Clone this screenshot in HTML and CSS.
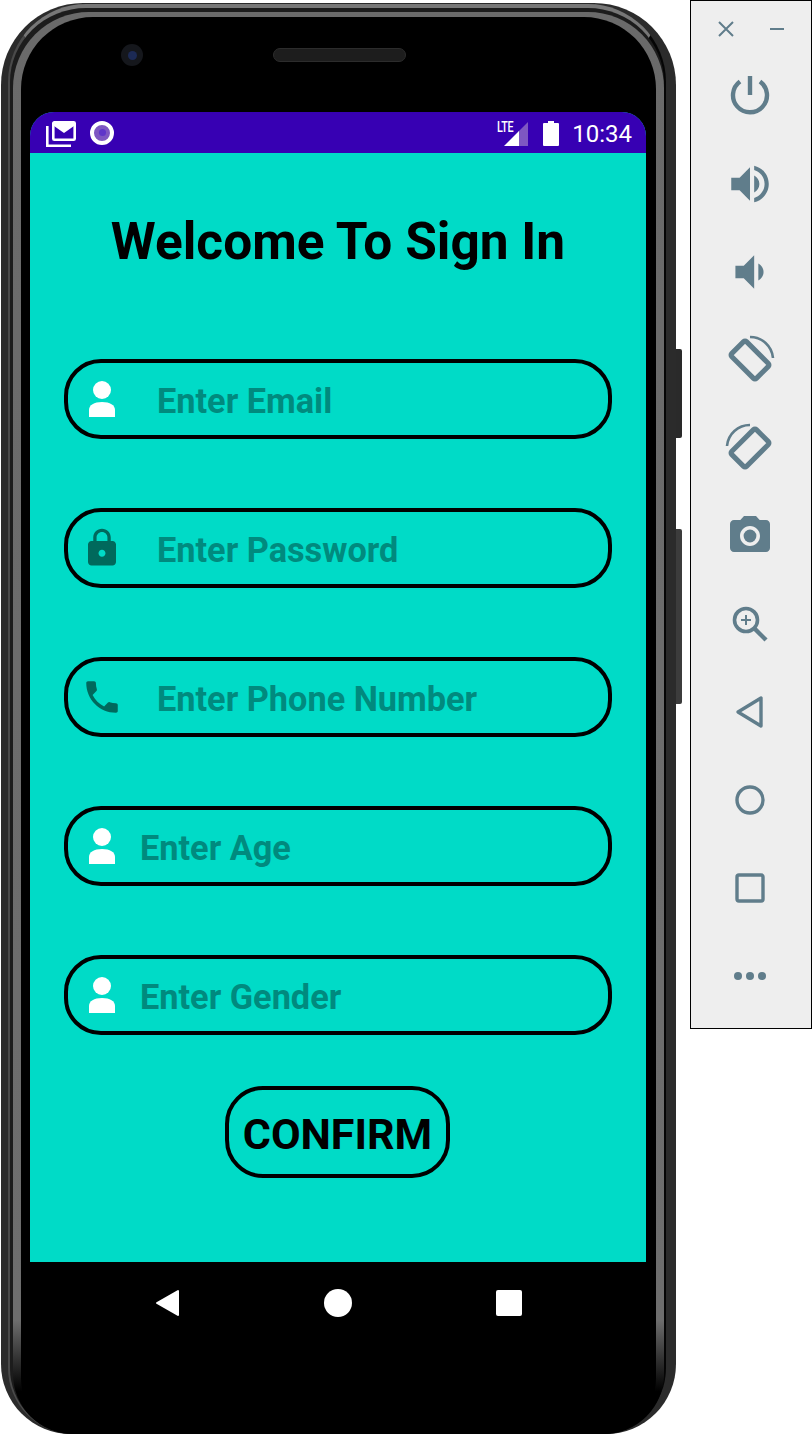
FILE: index.html
```html
<!DOCTYPE html>
<html lang="en">
<head>
<meta charset="UTF-8">
<meta name="viewport" content="width=device-width, initial-scale=1.0">
<title>Welcome To Sign In</title>
<link rel="stylesheet" href="styles.css">
</head>
<body>

<div class="phone">
    <div class="side-btn side-power"></div>
    <div class="side-btn side-volume"></div>
    <div class="band">
        <div class="rim">
            <div class="face">
                <div class="earpiece">
                    <div class="camera"><div class="lens"></div></div>
                    <div class="speaker"></div>
                </div>

                <div class="screen">
                    <div class="status-bar">
                        <svg class="st-mail" width="30" height="26" viewBox="0 0 30 26">
                            <path d="M1.300 5v19.700H25" fill="none" stroke="#fff" stroke-width="2.600"/>
                            <rect x="7.300" y="1.300" width="21.400" height="17.400" rx="1" fill="none" stroke="#fff" stroke-width="2.600"/>
                            <path d="M8 2h20v3l-10 7L8 5z" fill="#fff"/>
                        </svg>
                        <div class="st-record"><div class="st-record-dot"></div></div>
                        <div class="st-spacer"></div>
                        <div class="st-signal">
                            <span class="st-lte">LTE</span>
                            <svg width="26" height="26" viewBox="0 0 26 26">
                                <path d="M25 1v24H15V11z" fill="#7e57c2"/>
                                <path d="M1 25l15-15v15z" fill="#fff"/>
                            </svg>
                        </div>
                        <svg class="st-battery" width="16" height="25" viewBox="0 0 16 25">
                            <path d="M5 0h6v2h4a1 1 0 0 1 1 1v21a1 1 0 0 1-1 1H1a1 1 0 0 1-1-1V3a1 1 0 0 1 1-1h4z" fill="#fff"/>
                        </svg>
                        <span class="st-time">10:34</span>
                    </div>

                    <h1 class="title">Welcome To Sign In</h1>

                    <div class="fields">
                        <div class="field">
                            <div class="field-icon">
                                <svg width="42" height="42" viewBox="0 0 42 42">
                                    <circle cx="21" cy="12" r="9" fill="#fff"/>
                                    <path d="M8 39v-7c0-5 5-8 13-8s13 3 13 8v7z" fill="#fff"/>
                                </svg>
                            </div>
                            <span class="field-text">Enter Email</span>
                        </div>
                        <div class="field">
                            <div class="field-icon">
                                <svg width="42" height="42" viewBox="0 0 24 24">
                                    <path fill="#00695c" d="M18 8h-1V6c0-2.760-2.240-5-5-5S7 3.240 7 6v2H6c-1.100 0-2 .9-2 2v10c0 1.100.9 2 2 2h12c1.100 0 2-.9 2-2V10c0-1.100-.9-2-2-2zm-6 9c-1.100 0-2-.9-2-2s.9-2 2-2 2 .9 2 2-.9 2-2 2zm3.100-9H8.900V6c0-1.710 1.390-3.100 3.100-3.100 1.710 0 3.100 1.390 3.100 3.100v2z"/>
                                </svg>
                            </div>
                            <span class="field-text">Enter Password</span>
                        </div>
                        <div class="field">
                            <div class="field-icon">
                                <svg width="42" height="42" viewBox="0 0 24 24">
                                    <path fill="#00695c" d="M6.620 10.790c1.440 2.830 3.760 5.140 6.590 6.590l2.200-2.200c.27-.27.67-.36 1.020-.24 1.120.37 2.330.57 3.570.57.55 0 1 .45 1 1V20c0 .55-.45 1-1 1-9.390 0-17-7.610-17-17 0-.55.45-1 1-1h3.500c.55 0 1 .45 1 1 0 1.250.2 2.450.57 3.570.11.35.03.74-.25 1.020l-2.200 2.200z"/>
                                </svg>
                            </div>
                            <span class="field-text">Enter Phone Number</span>
                        </div>
                        <div class="field">
                            <div class="field-icon">
                                <svg width="42" height="42" viewBox="0 0 42 42">
                                    <circle cx="21" cy="12" r="9" fill="#fff"/>
                                    <path d="M8 39v-7c0-5 5-8 13-8s13 3 13 8v7z" fill="#fff"/>
                                </svg>
                            </div>
                            <span class="field-text field-text-near">Enter Age</span>
                        </div>
                        <div class="field">
                            <div class="field-icon">
                                <svg width="42" height="42" viewBox="0 0 42 42">
                                    <circle cx="21" cy="12" r="9" fill="#fff"/>
                                    <path d="M8 39v-7c0-5 5-8 13-8s13 3 13 8v7z" fill="#fff"/>
                                </svg>
                            </div>
                            <span class="field-text field-text-near">Enter Gender</span>
                        </div>
                    </div>

                    <div class="confirm-row">
                        <button class="confirm">CONFIRM</button>
                    </div>
                </div>

                <div class="nav-bar">
                    <svg width="26" height="30" viewBox="0 0 26 30">
                        <path d="M24 3v24L3 15z" fill="#fff" stroke="#fff" stroke-width="2" stroke-linejoin="round"/>
                    </svg>
                    <div class="nav-home"></div>
                    <div class="nav-recent"></div>
                </div>
            </div>
        </div>
    </div>
</div>

<div class="toolbar">
    <div class="toolbar-top">
        <svg width="16" height="16" viewBox="0 0 16 16">
            <path d="M1 1l14 14M15 1L1 15" stroke="#607d8b" stroke-width="2" fill="none"/>
        </svg>
        <div class="minimize"></div>
    </div>
    <div class="tool">
        <svg width="50" height="50" viewBox="0 0 50 50" fill="none" stroke="#607d8b" stroke-width="4.400">
            <path d="M15 10.500A17 17 0 1 0 35 10.500"/>
            <path d="M25 5v19"/>
        </svg>
    </div>
    <div class="tool">
        <svg width="50" height="50" viewBox="0 0 24 24">
            <path fill="#607d8b" d="M3 9v6h4l5 5V4L7 9H3zm13.500 3c0-1.770-1.020-3.290-2.500-4.030v8.050c1.480-.73 2.500-2.250 2.500-4.020zM14 3.230v2.060c2.890.86 5 3.540 5 6.710s-2.110 5.850-5 6.710v2.060c4.010-.91 7-4.490 7-8.770s-2.990-7.860-7-8.770z"/>
        </svg>
    </div>
    <div class="tool">
        <svg width="50" height="50" viewBox="0 0 24 24">
            <path fill="#607d8b" d="M18.500 12c0-1.770-1.020-3.290-2.500-4.030v8.050c1.480-.73 2.500-2.250 2.500-4.020zM5 9v6h4l5 5V4L9 9H5z"/>
        </svg>
    </div>
    <div class="tool">
        <svg width="50" height="50" viewBox="0 0 50 50" fill="none" stroke="#607d8b">
            <rect x="7.500" y="14.500" width="35" height="21" rx="2" stroke-width="5" transform="rotate(45 25 25)"/>
            <path d="M25 2A23 23 0 0 1 48 23" stroke-width="2.600"/>
        </svg>
    </div>
    <div class="tool">
        <svg width="50" height="50" viewBox="0 0 50 50" fill="none" stroke="#607d8b">
            <rect x="7.500" y="14.500" width="35" height="21" rx="2" stroke-width="5" transform="rotate(-45 25 25)"/>
            <path d="M25 2A23 23 0 0 0 2 23" stroke-width="2.600"/>
        </svg>
    </div>
    <div class="tool">
        <svg width="48" height="48" viewBox="0 0 24 24">
            <path fill="#607d8b" d="M9 2L7.170 4H4c-1.100 0-2 .9-2 2v12c0 1.100.9 2 2 2h16c1.100 0 2-.9 2-2V6c0-1.100-.9-2-2-2h-3.170L15 2H9zm3 15c-2.760 0-5-2.240-5-5s2.240-5 5-5 5 2.240 5 5-2.240 5-5 5z"/>
            <circle cx="12" cy="12" r="3.200" fill="#607d8b"/>
        </svg>
    </div>
    <div class="tool">
        <svg width="50" height="50" viewBox="0 0 50 50" fill="none" stroke="#607d8b">
            <circle cx="21" cy="21" r="11.500" stroke-width="3.600"/>
            <path d="M29.500 29.500L41 41" stroke-width="4.400"/>
            <path d="M21 16v10M16 21h10" stroke-width="2"/>
        </svg>
    </div>
    <div class="tool">
        <svg width="50" height="50" viewBox="0 0 50 50" fill="none" stroke="#607d8b" stroke-width="3.400" stroke-linejoin="round">
            <path d="M36 11v28L13 25z"/>
        </svg>
    </div>
    <div class="tool">
        <svg width="50" height="50" viewBox="0 0 50 50" fill="none" stroke="#607d8b" stroke-width="3.400">
            <circle cx="25" cy="25" r="13"/>
        </svg>
    </div>
    <div class="tool">
        <svg width="50" height="50" viewBox="0 0 50 50" fill="none" stroke="#607d8b" stroke-width="3.400">
            <rect x="12" y="12" width="26" height="26" rx="2"/>
        </svg>
    </div>
    <div class="tool">
        <svg width="50" height="50" viewBox="0 0 50 50" fill="#607d8b">
            <circle cx="13" cy="25" r="4"/>
            <circle cx="25" cy="25" r="4"/>
            <circle cx="37" cy="25" r="4"/>
        </svg>
    </div>
</div>

</body>
</html>
```

FILE: styles.css
```css
html, body {
    height: 1434px;
}

body {
    font-family: Roboto, "Liberation Sans", sans-serif;
    margin: 0;
    padding: 0;
    background: #fff;
    display: flex;
    align-items: flex-start;
    overflow: hidden;
}

/* phone body */
.phone {
    position: relative;
    flex: none;
    width: 675px;
    height: 1431px;
    margin: 3px 0 0 1px;
    padding: 1px 10px 0 7px;
    box-sizing: border-box;
    background: #2b2b2b;
    border-radius: 82px 82px 70px 70px;
}

.side-btn {
    position: absolute;
    left: 675px;
    width: 6px;
    background: #2a2a2a;
    border-radius: 0 2px 2px 0;
}

.side-power {
    top: 346px;
    height: 89px;
}

.side-volume {
    top: 526px;
    height: 175px;
    background: #3c3c3c;
}

.band {
    height: 100%;
    padding: 4px 0 0 3px;
    box-sizing: border-box;
    border-top: 4px solid #777;
    border-left: 2px solid #4a4a4a;
    border-right: 2px solid #050505;
    background: #1c1c1c;
    border-radius: 78px 78px 66px 66px;
}

.rim {
    height: 100%;
    padding: 5px 8px 0 8px;
    box-sizing: border-box;
    background: linear-gradient(to bottom, #6a6a6a, #6e6e6e 92%, #000 97%);
    border-radius: 76px 76px 60px 60px;
}

.face {
    height: 100%;
    padding: 0 10px 0 9px;
    box-sizing: border-box;
    background: #000;
    border-radius: 72px 72px 56px 56px;
}

.earpiece {
    height: 95px;
    display: flex;
    align-items: flex-start;
    padding: 26px 0 0 91px;
    box-sizing: border-box;
}

.camera {
    width: 22px;
    height: 22px;
    margin-top: 1px;
    border-radius: 50%;
    background: #15171c;
    display: flex;
    align-items: center;
    justify-content: center;
}

.lens {
    width: 9px;
    height: 9px;
    border-radius: 50%;
    background: #1c2a55;
}

.speaker {
    width: 133px;
    height: 14px;
    margin: 5px 0 0 130px;
    box-sizing: border-box;
    border: 1px solid #2c2c2c;
    border-radius: 7px;
    background: #1d1d1d;
}

/* app screen */
.screen {
    width: 616px;
    height: 1150px;
    background: #00dbc7;
    border-radius: 24px 24px 0 0;
    overflow: hidden;
}

.status-bar {
    height: 41px;
    display: flex;
    align-items: center;
    padding: 0 14px 0 16px;
    background: #3700b3;
    color: #fff;
}

.st-mail {
    margin-top: 2px;
}

.st-record {
    width: 16px;
    height: 16px;
    margin: 0 0 0 14px;
    border: 4px solid #fff;
    border-radius: 50%;
    background: #7e57c2;
    display: flex;
    align-items: center;
    justify-content: center;
}

.st-record-dot {
    width: 7px;
    height: 7px;
    border-radius: 50%;
    background: #5e35c9;
}

.st-spacer {
    flex: 1;
}

.st-signal {
    position: relative;
    width: 26px;
    height: 26px;
    margin-top: 2px;
}

.st-signal svg {
    display: block;
}

.st-lte {
    position: absolute;
    left: -6px;
    top: -3px;
    font-size: 15px;
    font-weight: 500;
    letter-spacing: -0.5px;
    transform: scaleX(0.72);
    transform-origin: left center;
}

.st-battery {
    margin: 2px 0 0 14px;
}

.st-time {
    margin-left: 13px;
    font-size: 24px;
    margin-top: 2px;
}

.title {
    margin: 59px 0 0;
    font-size: 51.4px;
    line-height: 60px;
    font-weight: 700;
    text-align: center;
    color: #000;
}

.fields {
    display: flex;
    flex-direction: column;
    gap: 69px;
    margin: 87px 0 0 34px;
}

.field {
    width: 548px;
    height: 80px;
    box-sizing: border-box;
    display: flex;
    align-items: center;
    border: 4px solid #000;
    border-radius: 37px;
}

.field-icon {
    flex: none;
    width: 68px;
    display: flex;
    justify-content: center;
}

.field-icon svg {
    display: block;
}

.field-text {
    padding: 3px 0 0 21px;
    font-size: 34.3px;
    font-weight: 700;
    color: #008a7e;
}

.field-text-near {
    padding-left: 4px;
}

.confirm-row {
    display: flex;
    justify-content: center;
    margin-top: 51px;
}

.confirm {
    width: 225px;
    height: 92px;
    padding: 3px 0 0;
    margin-right: 1px;
    box-sizing: border-box;
    background: transparent;
    border: 4px solid #000;
    border-radius: 38px;
    font-family: inherit;
    font-size: 43px;
    font-weight: 700;
    color: #000;
}

/* system nav */
.nav-bar {
    width: 616px;
    height: 82px;
    display: flex;
    align-items: center;
    padding: 0 124px;
    box-sizing: border-box;
    justify-content: space-between;
}

.nav-home {
    width: 28px;
    height: 28px;
    border-radius: 50%;
    background: #fff;
}

.nav-recent {
    width: 26px;
    height: 26px;
    border-radius: 2px;
    background: #fff;
}

/* emulator side panel */
.toolbar {
    flex: none;
    width: 122px;
    height: 1029px;
    margin-left: 14px;
    box-sizing: border-box;
    border: 1px solid #000;
    background: #eee;
}

.toolbar-top {
    height: 51px;
    display: flex;
    align-items: center;
    padding: 4px 27px 0 27px;
    box-sizing: border-box;
    justify-content: space-between;
}

.minimize {
    width: 14px;
    height: 2px;
    background: #607d8b;
}

.tool {
    height: 88px;
    padding-right: 2px;
    display: flex;
    align-items: center;
    justify-content: center;
}
```
